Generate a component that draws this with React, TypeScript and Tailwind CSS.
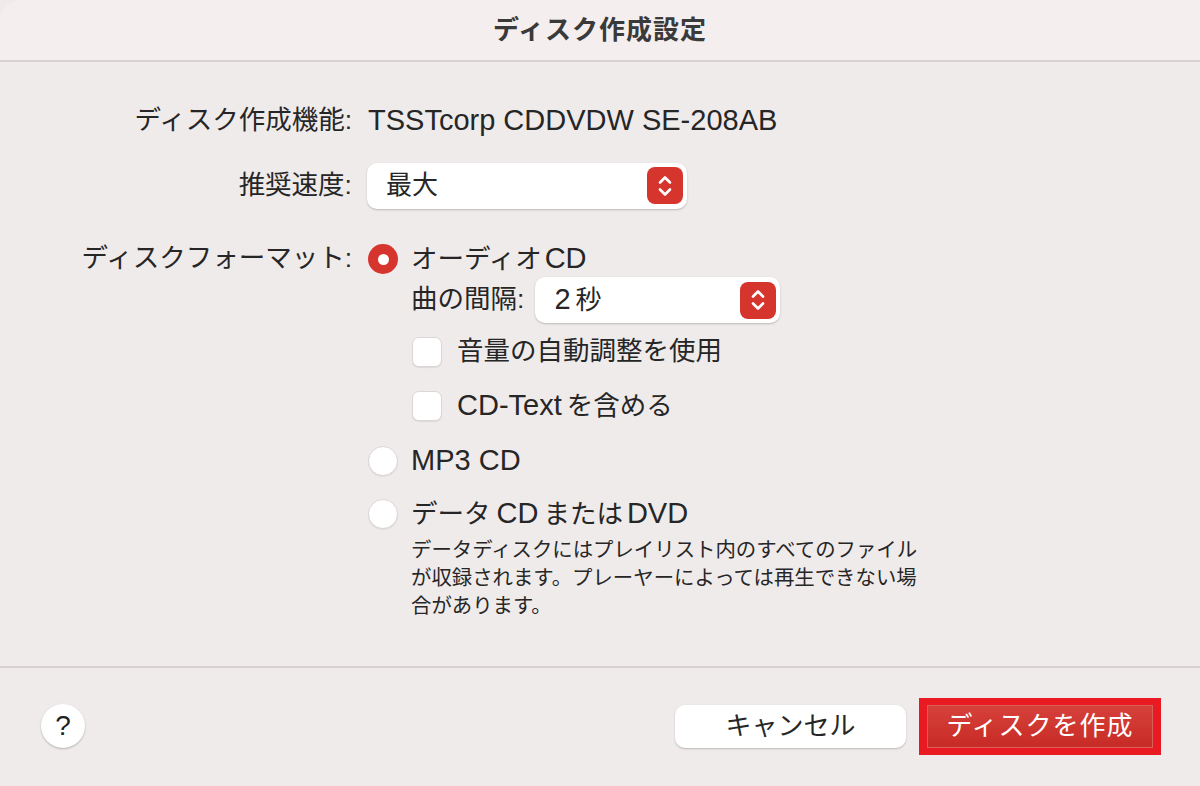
import React from "react";

const font = { fontFamily: '"Liberation Sans", "Noto Sans CJK JP", sans-serif' };

// Latin runs are drawn a bit larger than kana, as the system font does
const L = ({ children }: { children: React.ReactNode }) => (
  <span className="text-[29px]">{children}</span>
);

const Stepper = () => (
  <div className="w-[36px] h-[37px] rounded-[8px] bg-[#d6352e] flex items-center justify-center">
    <svg width="16" height="26" viewBox="0 0 16 26" fill="none" stroke="white" strokeWidth="2.6" strokeLinecap="round" strokeLinejoin="round">
      <path d="M3 9.5 L8 4.5 L13 9.5" />
      <path d="M3 16.5 L8 21.5 L13 16.5" />
    </svg>
  </div>
);

const Select = ({ children, width }: { children: React.ReactNode; width: string }) => (
  <div className={`${width} h-[46px] bg-white rounded-[10px] shadow-[0_1px_2px_rgba(0,0,0,0.22)] flex items-center justify-between pl-[19px] pr-[4px]`}>
    <span className="text-[26px] text-[#262626]">{children}</span>
    <Stepper />
  </div>
);

const Radio = ({ checked }: { checked?: boolean }) =>
  checked ? (
    <div className="w-[30px] h-[30px] rounded-full bg-[#d6352e] flex items-center justify-center">
      <div className="w-[11px] h-[11px] rounded-full bg-white" />
    </div>
  ) : (
    <div className="w-[30px] h-[30px] rounded-full bg-white border border-[#ddd6d6] shadow-[0_1px_1px_rgba(0,0,0,0.08)]" />
  );

const Checkbox = () => (
  <div className="w-[30px] h-[30px] rounded-[7px] bg-white border border-[#ddd6d6] shadow-[0_1px_1px_rgba(0,0,0,0.08)]" />
);

export default function App() {
  return (
    <div className="w-[1200px] h-[786px] bg-[#f0ebeb] text-[#262626] flex flex-col overflow-hidden text-[26.5px]" style={font}>
      {/* Title bar */}
      <div className="h-[60px] bg-[#f5eeef] flex items-center justify-center rounded-tl-[22px]">
        <span className="text-[26px] font-bold text-[#3a3a3a] tracking-[1px]">ディスク作成設定</span>
      </div>
      <div className="h-[2px] bg-[#d8d1d1]" />

      {/* Body */}
      <div className="h-[604px] flex flex-col pt-[39px]">
        <div className="h-[40px] flex items-center">
          <div className="w-[352px] text-right">ディスク作成機能:</div>
          <div className="ml-[16px]">
            <L>TSSTcorp CDDVDW SE-208AB</L>
          </div>
        </div>

        <div className="mt-[22px] h-[45px] flex items-center">
          <div className="w-[352px] text-right">推奨速度:</div>
          <div className="ml-[15px]">
            <Select width="w-[320px]">最大</Select>
          </div>
        </div>

        <div className="mt-[33px] flex">
          <div className="w-[352px] h-[36px] flex items-center justify-end">ディスクフォーマット:</div>
          <div className="ml-[16px] flex flex-col">
            <div className="h-[36px] flex items-center gap-[13px]">
              <Radio checked />
              <span>
                オーディオ<span className="ml-[3px]"><L>CD</L></span>
              </span>
            </div>
            <div className="pl-[43px] flex flex-col">
              <div className="h-[46px] flex items-center">
                <span>曲の間隔:</span>
                <div className="ml-[11px]">
                  <Select width="w-[245px]">
                    <L>2</L>
                    <span className="ml-[5px]">秒</span>
                  </Select>
                </div>
              </div>
              <div className="mt-[9px] h-[40px] flex items-center gap-[15px] pl-[1px]">
                <Checkbox />
                <span>音量の自動調整を使用</span>
              </div>
              <div className="mt-[14px] h-[40px] flex items-center gap-[15px] pl-[1px]">
                <Checkbox />
                <span>
                  <L>CD-Text</L>
                  <span className="ml-[5px]">を含める</span>
                </span>
              </div>
            </div>
            <div className="mt-[15px] h-[40px] flex items-center gap-[13px]">
              <Radio />
              <L>MP3 CD</L>
            </div>
            <div className="mt-[13px] h-[40px] flex items-center gap-[13px]">
              <Radio />
              <span>
                データ<span className="ml-[6px]"><L>CD</L></span>
                <span className="ml-[5px]">または</span>
                <span className="ml-[4px]"><L>DVD</L></span>
              </span>
            </div>
            <div className="pl-[43px] mt-[2px] w-[580px] text-[20.4px] leading-[28px]">
              データディスクにはプレイリスト内のすべてのファイル
              <br />
              が収録されます。プレーヤーによっては再生できない場
              <br />
              合があります。
            </div>
          </div>
        </div>
      </div>

      <div className="h-[2px] bg-[#d8d1d1]" />

      {/* Footer */}
      <div className="flex-1 flex items-start pt-[30px] pl-[41px] pr-[39px]">
        <div className="mt-[6px] w-[44px] h-[44px] rounded-full bg-white shadow-[0_1px_2px_rgba(0,0,0,0.25)] flex items-center justify-center text-[28px] text-[#1f1f1f]">
          ?
        </div>
        <div className="ml-auto flex items-start">
          <div className="mt-[7px] w-[231px] h-[43px] rounded-[10px] bg-white shadow-[0_1px_2px_rgba(0,0,0,0.22)] flex items-center justify-center text-[26px]">
            キャンセル
          </div>
          <div className="ml-[13px] w-[242px] h-[57px] bg-[#ea1a22] flex items-center justify-center">
            <div className="w-[226px] h-[43px] bg-gradient-to-b from-[#d6413a] to-[#c82a26] border border-[#d9605a] flex items-center justify-center text-[26px] text-white tracking-[1px]">
              ディスクを作成
            </div>
          </div>
        </div>
      </div>
    </div>
  );
}
